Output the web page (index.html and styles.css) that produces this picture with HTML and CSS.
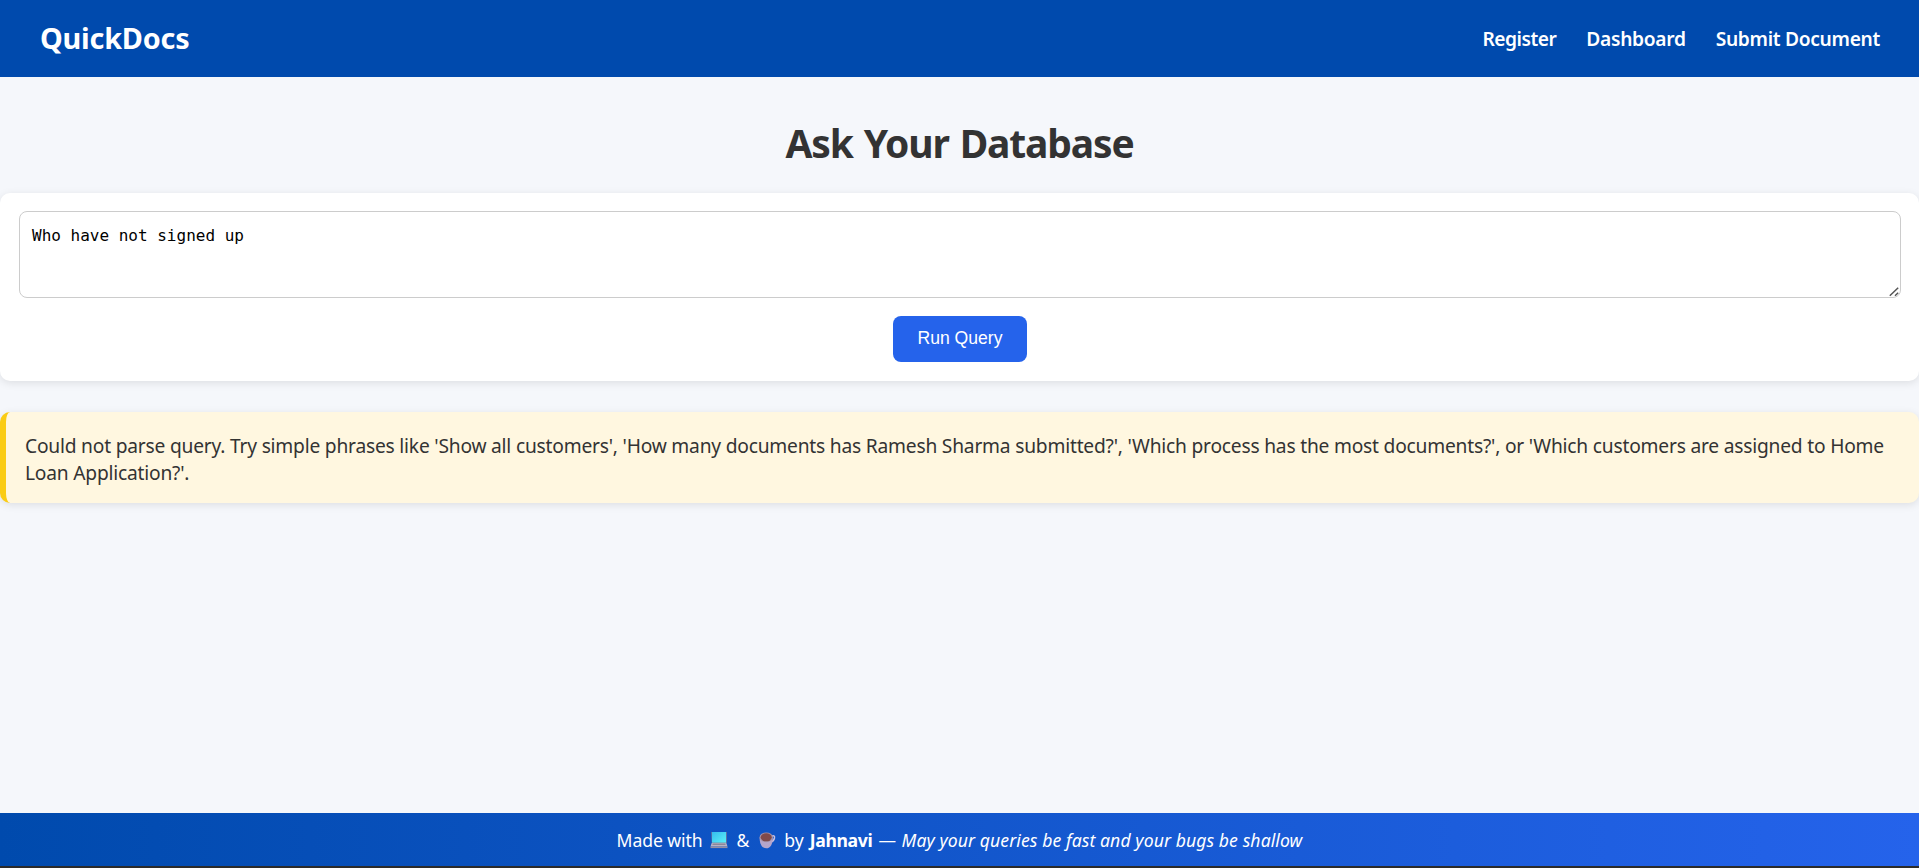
FILE: index.html
```html
<!DOCTYPE html>
<html lang="en">
<head>
<meta charset="utf-8">
<title>QuickDocs</title>
<link rel="stylesheet" href="styles.css">
</head>
<body>
<header class="header">
  <div class="logo">QuickDocs</div>
  <nav class="nav">
    <a class="register">Register</a>
    <a>Dashboard</a>
    <a>Submit Document</a>
  </nav>
</header>
<main class="main">
  <h1 class="title">Ask Your Database</h1>
  <form class="card">
    <div class="field">
      <textarea class="query" spellcheck="false">Who have not signed up</textarea>
      <svg class="grip" width="10" height="10" viewBox="0 0 10 10"><path d="M.8 8.800 9.200 .8M6 8.800l3.200-3" fill="none" stroke="#555" stroke-width="1.500" stroke-dasharray="12 0"/></svg>
    </div>
    <button class="run" type="button">Run Query</button>
  </form>
  <div class="alert">Could not parse query. Try simple phrases like 'Show all customers', 'How many documents has Ramesh Sharma submitted?', 'Which process has the most documents?', or 'Which customers are assigned to Home Loan Application?'.</div>
</main>
<footer class="footer">
  <span class="made">Made with</span>
  <svg class="laptop" width="18" height="18" viewBox="0 0 18 18">
    <defs><linearGradient id="screen" x1="0" y1="0" x2="1" y2="1"><stop offset="0" stop-color="#35bdee"/><stop offset="1" stop-color="#5cf0f7"/></linearGradient></defs>
    <path d="M1.3 1h15.400v11H1.800z" fill="#7f7f95"/>
    <path d="M2 1h14v10.600H2z" fill="url(#screen)"/>
    <path d="M1.700 12h14.600l1.200 3.600H.5z" fill="#b9b3c4"/>
    <path d="M2.700 12.600h12.600l.3 1.300H2.400z" fill="#8c8799"/>
    <path d="M.5 15.500h17v1.600H.5z" fill="#958fa3"/>
  </svg>
  <span class="amp">&amp;</span>
  <svg class="cup" width="17" height="18" viewBox="0 0 17 18">
    <path d="M12.500 5.500c2-1.500 3.400-.7 3 1.500s-2 3.500-4 4.200" fill="none" stroke="#c9bfdf" stroke-width="1.500"/>
    <path d="M.6 6.400c0 6 2 10.900 6.600 10.900s6.600-4.900 6.600-10.900z" fill="#b5a5cb"/>
    <ellipse cx="7.200" cy="6.300" rx="6.600" ry="4.900" fill="#a592a9"/>
    <ellipse cx="7.200" cy="6.300" rx="5.500" ry="4" fill="#804a4a"/>
  </svg>
  <span class="by">by</span>
  <strong class="author">Jahnavi</strong>
  <span class="dash">—</span>
  <em class="motto">May your queries be fast and your bugs be shallow</em>
</footer>
</body>
</html>
```
FILE: styles.css
```css
* { box-sizing: border-box; }
html, body { height: 100%; }
body {
  margin: 0;
  display: flex;
  flex-direction: column;
  background: #f5f7fb;
  color: #333;
  font-family: "Noto Sans", sans-serif;
  overflow: hidden;
}
.header {
  flex: none;
  display: flex;
  align-items: center;
  justify-content: space-between;
  height: 77px;
  padding: 0 39px 0 40px;
  background: #004aad;
  color: #fff;
}
.logo {
  padding-bottom: 3px;
  font-size: 28.8px;
  font-weight: 700;
  letter-spacing: -0.2px;
}
.nav {
  display: flex;
  gap: 30px;
  font-size: 19.2px;
  font-weight: 600;
  letter-spacing: -0.3px;
}
.register { letter-spacing: -0.5px; }
.main { flex: 1; }
.title {
  margin: 0;
  padding: 39px 0 23px;
  color: #333;
  font-size: 39px;
  line-height: 54px;
  font-weight: 700;
  letter-spacing: -1.15px;
  word-spacing: 2px;
  text-align: center;
}
.card {
  display: flex;
  flex-direction: column;
  align-items: center;
  gap: 18px;
  height: 188px;
  margin: 0 0 31px;
  padding: 18px 18px 19px 19px;
  background: #fff;
  border-radius: 10px;
  box-shadow: 0 2px 8px rgba(0, 0, 0, 0.1);
}
.field {
  position: relative;
  width: 100%;
  height: 87px;
}
.query {
  display: block;
  width: 100%;
  height: 100%;
  margin: 0;
  padding: 14px 12px 12px;
  border: 1px solid #ccc;
  border-radius: 8px;
  outline: none;
  background: #fff;
  color: #000;
  font: 16px/20px "DejaVu Sans Mono", monospace;
  resize: none;
}
/* Resize handle over the field's corner */
.grip {
  position: absolute;
  right: 2px;
  bottom: 1px;
}
.run {
  width: 134px;
  height: 46px;
  padding: 0 0 2px;
  border: 0;
  border-radius: 8px;
  background: #2563eb;
  color: #fff;
  font: 17.6px "Liberation Sans", sans-serif;
}
.alert {
  height: 91px;
  padding: 20px 19px 17px;
  border-left: 6px solid #facc15;
  border-radius: 10px;
  background: #fff7e0;
  box-shadow: 0 2px 8px rgba(0, 0, 0, 0.1);
  color: #333;
  font-size: 19.2px;
  line-height: 27px;
  letter-spacing: -0.205px;
}
.footer {
  flex: none;
  display: flex;
  align-items: center;
  justify-content: center;
  height: 55px;
  border-bottom: 2px solid #2b2b2b;
  background: linear-gradient(90deg, #004aad, #2563eb);
  color: #fff;
  font-size: 17.6px;
  white-space: nowrap;
}
.made { letter-spacing: -0.1px; }
.laptop { margin: 0 8px 0 8px; }
.cup { margin: 0 8px 0 10px; }
.author { margin: 0 6px 0 6px; letter-spacing: -0.35px; }
.motto { margin-left: 5.5px; letter-spacing: 0.09px; }
```
